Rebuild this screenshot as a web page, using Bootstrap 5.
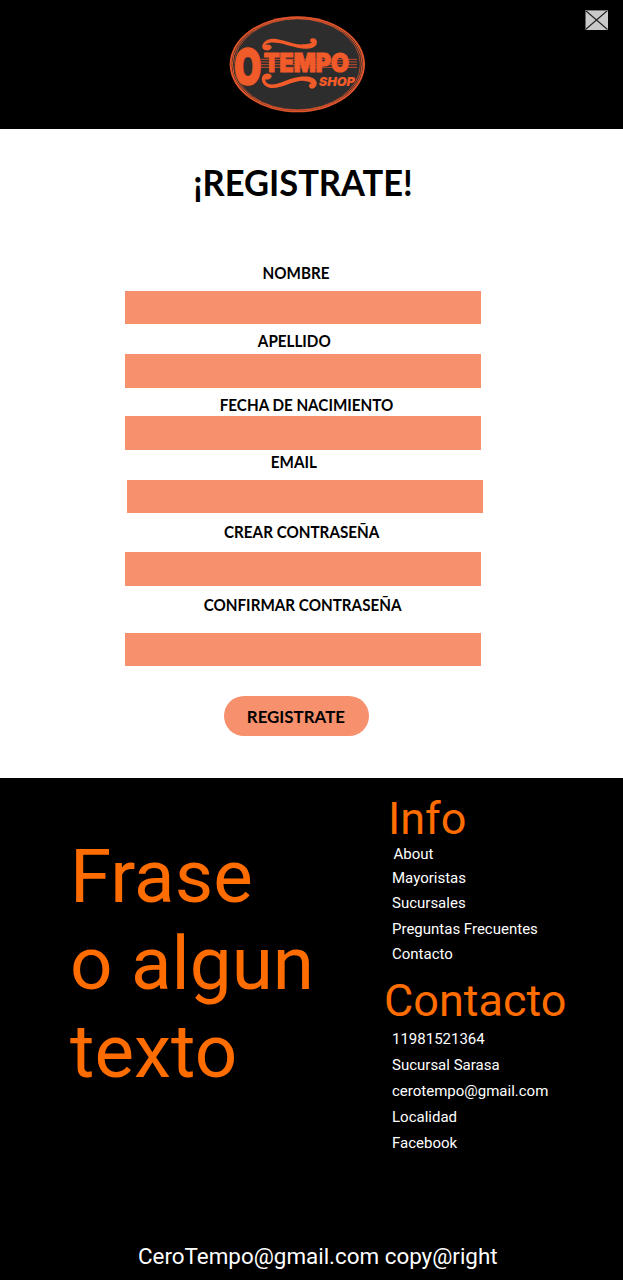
<!DOCTYPE html>
<html lang="es">
<head>
<meta charset="utf-8">
<meta name="viewport" content="width=device-width, initial-scale=1">
<title>O Tempo Shop - Registrate</title>
<link rel="stylesheet" href="https://cdn.jsdelivr.net/npm/bootstrap@5.3.0/dist/css/bootstrap.min.css">
<style>
body{font-family:Roboto,sans-serif;background:#fff;color:#000}
.site-head{height:129px;padding:8px 15px 0 220px}
.mail-link{margin-top:2px;line-height:0}
.signup{height:648.5px;font-family:Lato,sans-serif;font-weight:700}
.signup h1{width:606px;font-size:36.5px;font-weight:700;line-height:48px;margin:29px 0 0;transform:scaleX(.945)}
.signup form{width:355.7px;margin:56.8px 0 0 125.3px}
.field{display:flex;flex-direction:column;align-items:center}
.field label{font-size:16.4px;line-height:20px;white-space:nowrap;transform:scaleX(.928)}
.field .form-control{height:33.5px;background:#f7906d;padding:0 12px}
.f-name label{margin:0 14px 8.2px 0}
.f-last label{margin:7px 18px 3px 0}
.f-birth label{margin:7px 0 1.5px 7px}
.f-mail label{margin:2.5px 19px 7.5px 0}
.f-mail .form-control{position:relative;left:1.7px}
.f-pass label{margin:8.5px 2px 10.5px 0}
.f-conf label{margin:9.5px 1px 17.5px 0}
.btn-signup{width:145px;height:40px;margin:29.3px 0 0 98.7px;background:#f7906d;color:#000;font-size:17.5px;font-weight:700;line-height:41px}
.btn-signup:hover{background:#f37f57}
.btn-signup span{display:inline-block;margin-right:2px;transform:scaleX(.965)}
.site-foot{height:502.5px}
.orange{color:#ff6c00}
.slogan{width:385px;padding:55px 0 0 70px;font-size:74.6px;line-height:87.9px}
.site-foot h2{font-size:45px;font-weight:400;line-height:52px;margin:0}
.info-title{padding:15px 0 0 3px}
.contact-title{padding:11.5px 0 3.5px}
.foot-links{padding-left:7px}
.site-foot a{display:block;font-size:15px;line-height:18px;color:#fff;text-decoration:none;margin-bottom:7.5px}
.site-foot .about{margin:0 0 6px 1.5px}
.site-foot .foot-contact a{margin-bottom:8px}
.copy{font-size:22.4px;line-height:26px;padding:0 0 11px 138px}
</style>
</head>
<body>
<header class="site-head bg-black d-flex justify-content-between align-items-start">
  <svg width="155" height="112" viewBox="0 0 465 336" role="img" aria-label="O Tempo Shop">
    <ellipse cx="232" cy="169" rx="203" ry="144" fill="#e2542a"/>
    <ellipse cx="232" cy="169" rx="197" ry="139" fill="#2d2d2d"/>
    <ellipse cx="232" cy="169" rx="194.5" ry="138" fill="none" stroke="#e2542a" stroke-width="3"/>
    <ellipse cx="232" cy="169" rx="189" ry="136.5" fill="none" stroke="#e2542a" stroke-width="2"/>
    <path d="M122 154H411M122 162H411M122 170H411M122 178H411" stroke="#d9522b" stroke-width="2.6"/>
    <g fill="#f15a29">
      <path d="M155 118C155 127 137 131 130 124C121 113 132 96 152 93C184 89 216 113 252 109C266 107 274 105 276 104C268 102 268 92 277 91C289 90 294 101 289 110C281 124 254 124 232 119C200 112 174 101 150 104C142 105 136 109 136 112C142 107 155 111 155 118Z"/>
      <path d="M155 205C155 196 139 194 131 200C119 210 127 234 148 239C184 244 216 218 248 218C262 219 272 223 275 226C267 226 264 236 271 241C281 246 292 235 290 223C286 207 262 203 236 207C202 212 178 231 150 229C141 228 135 220 136 214C142 218 155 212 155 205Z"/>
    </g>
    <ellipse cx="83" cy="175" rx="40" ry="57" fill="#2d2d2d"/>
    <text x="43" y="228" font-family="Inter,sans-serif" font-weight="900" font-size="144" textLength="81" lengthAdjust="spacingAndGlyphs" fill="#f15a29" stroke="#f15a29" stroke-width="5">O</text>
    <g font-family="Inter,sans-serif" font-weight="900" fill="#f15a29">
      <text x="131" y="191" font-size="76" textLength="256" lengthAdjust="spacingAndGlyphs" stroke="#f15a29" stroke-width="3">TEMPO</text>
      <text x="296" y="233" font-size="36" font-style="italic" textLength="109" lengthAdjust="spacingAndGlyphs">SHOP</text>
    </g>
  </svg>
  <a class="mail-link" href="#" aria-label="Correo">
    <svg width="23" height="20" viewBox="0 0 23 20"><rect x=".5" width="22.5" height="20" fill="#c9c9c9"/><path d="M.5 .5L22.5 19.5M22.5 .5L.5 19.5" stroke="#222" stroke-width="1.1"/><path d="M.5 .5H22.5" stroke="#777" stroke-width="1"/></svg>
  </a>
</header>

<main class="signup overflow-hidden">
  <h1 class="text-center">¡REGISTRATE!</h1>
  <form>
    <div class="field f-name"><label for="nombre">NOMBRE</label><input id="nombre" class="form-control border-0 rounded-0"></div>
    <div class="field f-last"><label for="apellido">APELLIDO</label><input id="apellido" class="form-control border-0 rounded-0"></div>
    <div class="field f-birth"><label for="fecha">FECHA DE NACIMIENTO</label><input id="fecha" class="form-control border-0 rounded-0"></div>
    <div class="field f-mail"><label for="email">EMAIL</label><input id="email" type="email" class="form-control border-0 rounded-0"></div>
    <div class="field f-pass"><label for="pass">CREAR CONTRASEÑA</label><input id="pass" type="password" class="form-control border-0 rounded-0"></div>
    <div class="field f-conf"><label for="conf">CONFIRMAR CONTRASEÑA</label><input id="conf" type="password" class="form-control border-0 rounded-0"></div>
    <button type="button" class="btn btn-signup border-0 rounded-pill p-0 d-block"><span>REGISTRATE</span></button>
  </form>
</main>

<footer class="site-foot bg-black text-white d-flex flex-column overflow-hidden">
  <div class="d-flex flex-grow-1">
    <div class="slogan orange">Frase<br>o algun<br>texto</div>
    <div>
      <h2 class="orange info-title">Info</h2>
      <nav class="foot-links">
        <a href="#" class="about">About</a>
        <a href="#">Mayoristas</a>
        <a href="#">Sucursales</a>
        <a href="#">Preguntas Frecuentes</a>
        <a href="#" class="mb-0">Contacto</a>
      </nav>
      <h2 class="orange contact-title"><span style="margin-left:-1px">Contacto</span></h2>
      <nav class="foot-links foot-contact">
        <a href="#">11981521364</a>
        <a href="#">Sucursal Sarasa</a>
        <a href="#">cerotempo@gmail.com</a>
        <a href="#">Localidad</a>
        <a href="#">Facebook</a>
      </nav>
    </div>
  </div>
  <div class="copy">CeroTempo@gmail.com copy@right</div>
</footer>
<script src="https://cdn.jsdelivr.net/npm/bootstrap@5.3.0/dist/js/bootstrap.bundle.min.js"></script>
</body>
</html>
